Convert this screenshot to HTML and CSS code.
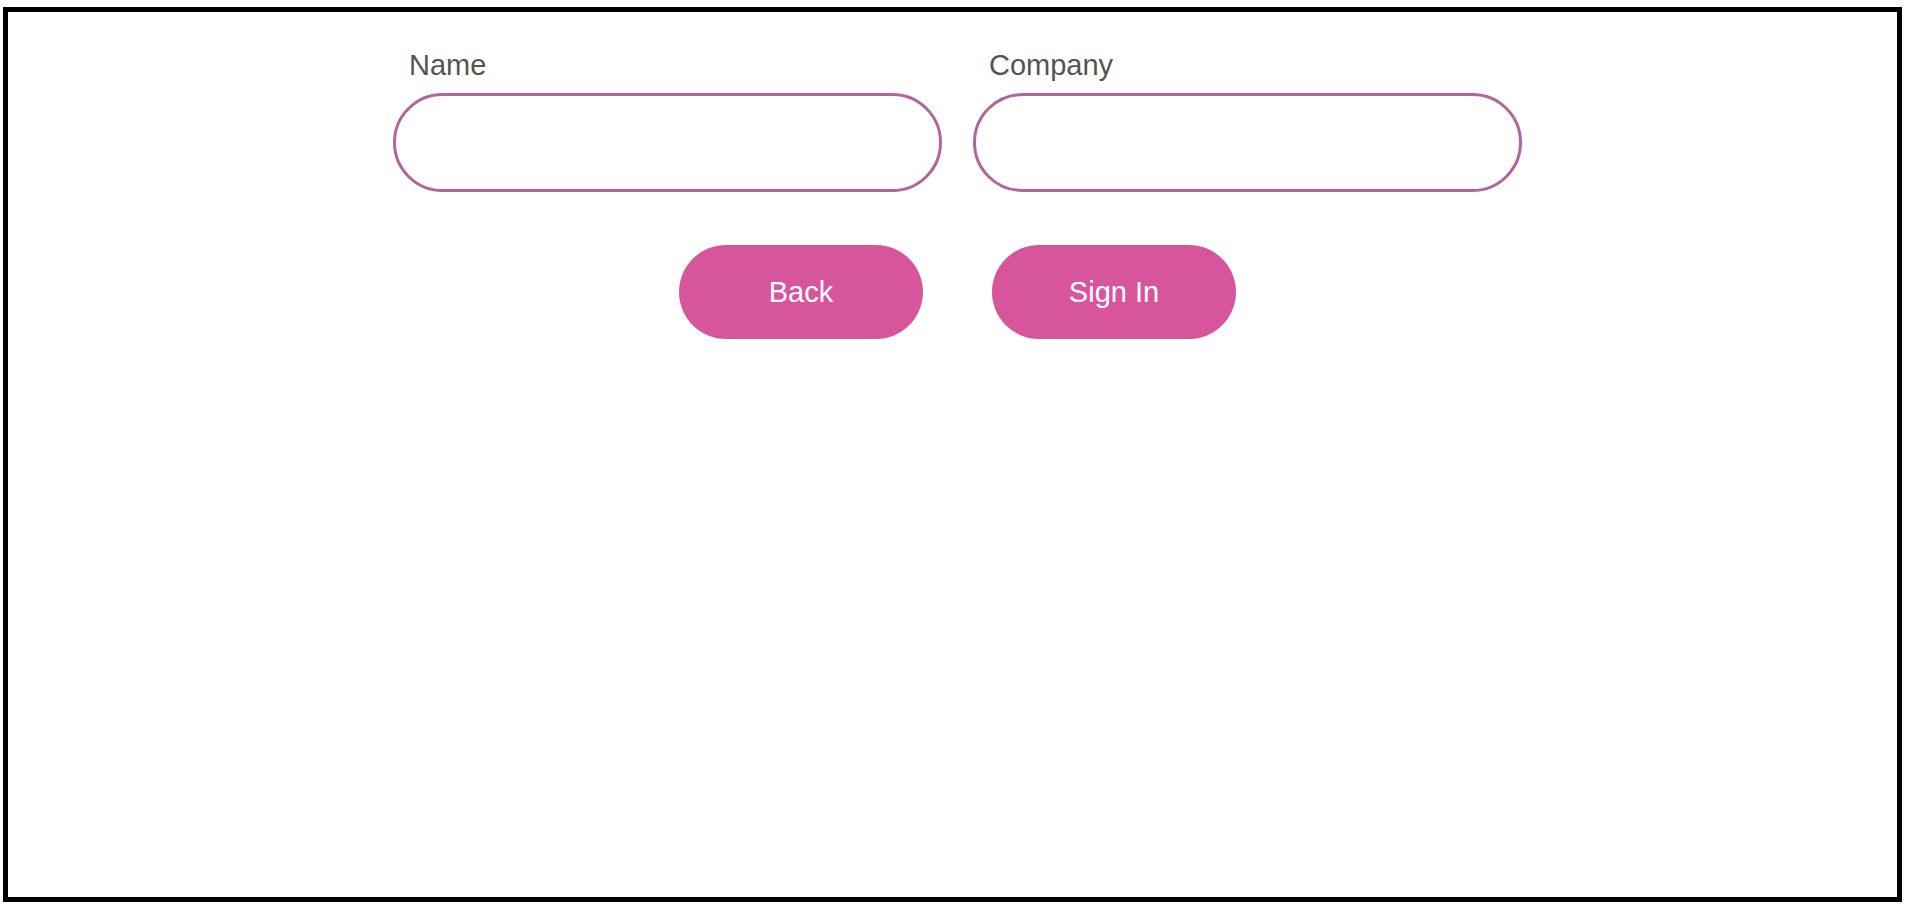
FILE: index.html
```html
<!DOCTYPE html>
<html lang="en">
<head>
<meta charset="utf-8">
<title>Sign In</title>
<link rel="stylesheet" href="styles.css">
</head>
<body>
<div class="frame">
  <form class="form">
    <div class="fields">
      <div class="field">
        <label class="label" for="name">Name</label>
        <input class="input" id="name" type="text">
      </div>
      <div class="field">
        <label class="label" for="company">Company</label>
        <input class="input" id="company" type="text">
      </div>
    </div>
    <div class="actions">
      <button class="btn" type="button">Back</button>
      <button class="btn" type="button">Sign In</button>
    </div>
  </form>
</div>
</body>
</html>
```

FILE: styles.css
```css
html, body {
  margin: 0;
  padding: 0;
  background: #ffffff;
}
body {
  font-family: "Liberation Sans", Arial, sans-serif;
}
.frame {
  box-sizing: border-box;
  margin: 7px 12px 9px 3px;
  height: 895px;
  border: 5px solid #000000;
  padding: 37px 0 0 10px;
  background: #ffffff;
}
.form {
  display: flex;
  flex-direction: column;
  align-items: center;
}
.fields {
  display: flex;
  gap: 31px;
}
.field {
  display: flex;
  flex-direction: column;
  width: 549px;
}
.label {
  font-size: 29px;
  line-height: 33px;
  color: #545454;
  padding-left: 16px;
  margin-bottom: 11px;
}
.input {
  box-sizing: border-box;
  width: 549px;
  height: 99px;
  border: 3px solid #b3649a;
  border-radius: 50px;
  background: #ffffff;
  outline: none;
  padding: 0 30px;
  font-family: inherit;
  font-size: 29px;
}
.actions {
  display: flex;
  gap: 69px;
  margin-top: 53px;
}
.btn {
  box-sizing: border-box;
  width: 244px;
  height: 94px;
  border: none;
  border-radius: 47px;
  background: #d6559b;
  color: #ffffff;
  font-family: inherit;
  font-size: 29px;
  padding: 0;
  cursor: pointer;
}
```
